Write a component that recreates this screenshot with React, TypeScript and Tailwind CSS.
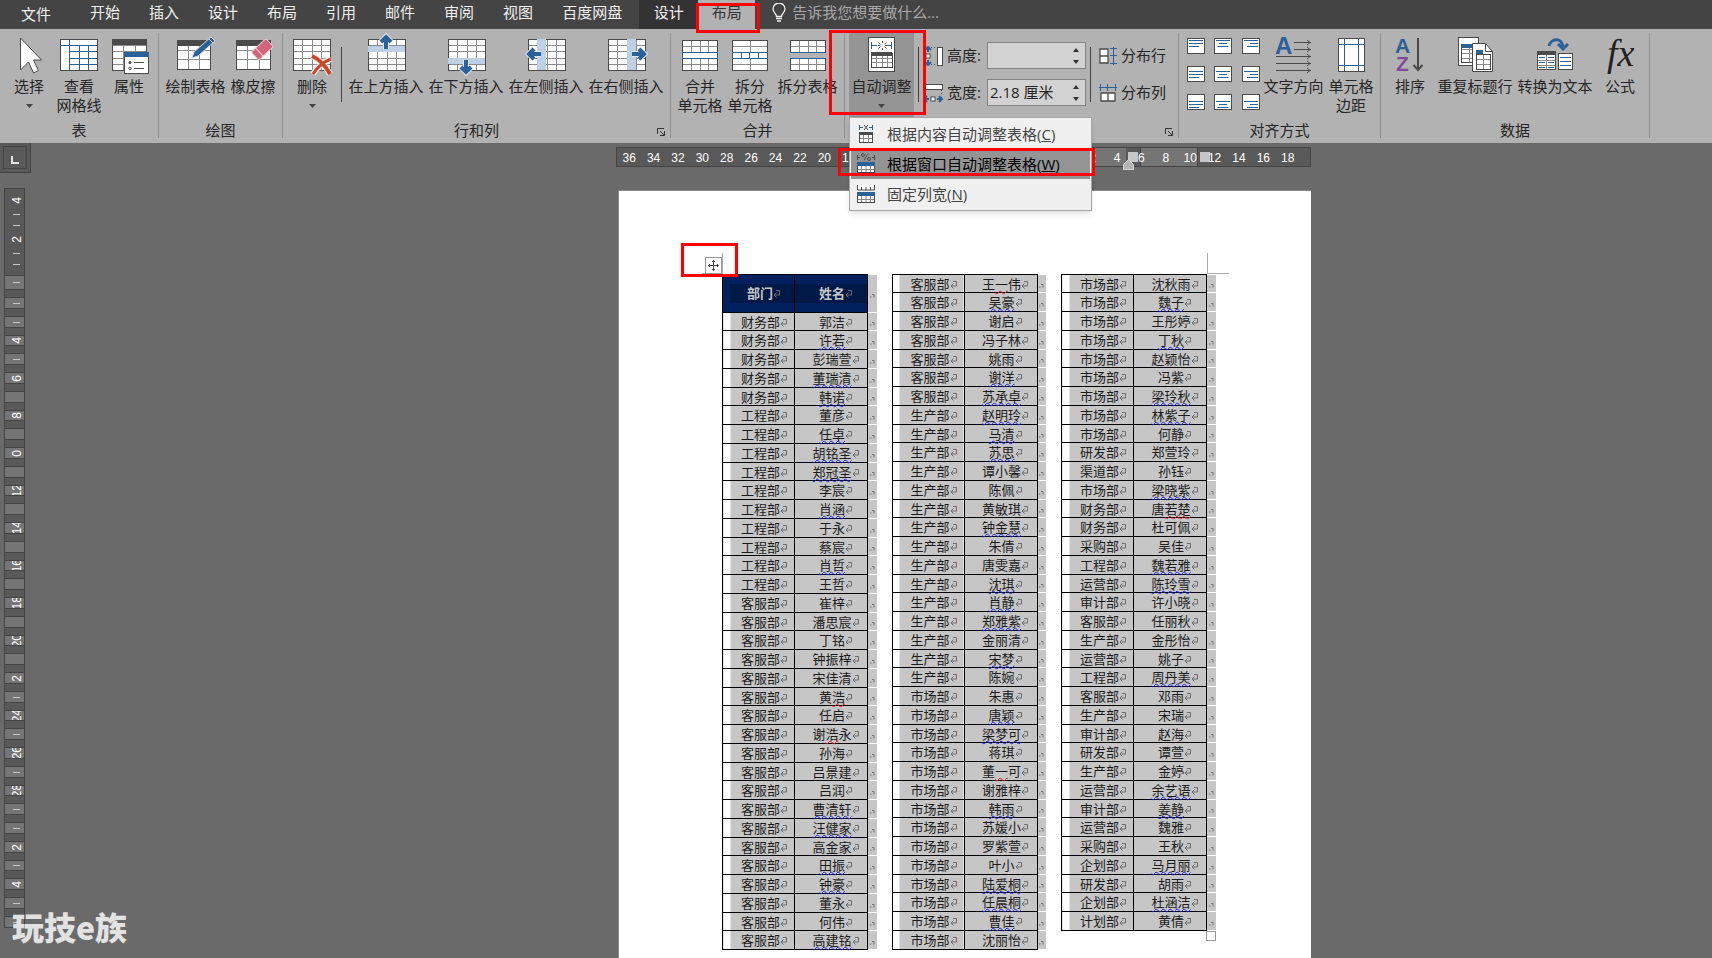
import React from 'react';

const INK = '#4a4a4a';
const BLUE = '#2b6199';
const TINT = '#bdd0e6';

const tabs = ['开始', '插入', '设计', '布局', '引用', '邮件', '审阅', '视图', '百度网盘'];

// "~" marks a grammar squiggle under the whole name, [..] a spelling squiggle
const columns: [string, string][][] = [
  [
    ['财务部', '郭洁'], ['财务部', '~许若'], ['财务部', '彭瑞萱'], ['财务部', '~董瑞清'], ['财务部', '~韩诺'],
    ['工程部', '董彦'], ['工程部', '~任卓'], ['工程部', '~胡铭圣'], ['工程部', '~郑冠圣'], ['工程部', '李宸'],
    ['工程部', '~肖涵'], ['工程部', '于永'], ['工程部', '蔡宸'], ['工程部', '~肖哲'], ['工程部', '王哲'],
    ['客服部', '崔梓'], ['客服部', '潘思宸'], ['客服部', '丁铭'], ['客服部', '钟振梓'], ['客服部', '宋佳清'],
    ['客服部', '黄[浩]'], ['客服部', '任启'], ['客服部', '谢[浩]永'], ['客服部', '孙海'], ['客服部', '吕景建'],
    ['客服部', '吕润'], ['客服部', '~曹清轩'], ['客服部', '~汪健家'], ['客服部', '高金家'], ['客服部', '~田振'],
    ['客服部', '~钟豪'], ['客服部', '董永'], ['客服部', '何伟'], ['客服部', '~高建铭'],
  ],
  [
    ['客服部', '王[一]伟'], ['客服部', '~吴豪'], ['客服部', '谢启'], ['客服部', '冯子林'], ['客服部', '姚雨'],
    ['客服部', '~谢洋'], ['客服部', '~苏承卓'], ['生产部', '~赵明玲'], ['生产部', '~马清'], ['生产部', '~苏思'],
    ['生产部', '谭小馨'], ['生产部', '陈佩'], ['生产部', '黄敏琪'], ['生产部', '~钟金慧'], ['生产部', '朱倩'],
    ['生产部', '唐雯嘉'], ['生产部', '~沈琪'], ['生产部', '~肖静'], ['生产部', '~郑雅紫'], ['生产部', '金丽清'],
    ['生产部', '~宋梦'], ['生产部', '陈婉'], ['市场部', '朱惠'], ['市场部', '~唐颖'], ['市场部', '~梁梦可'],
    ['市场部', '蒋琪'], ['市场部', '董[一]可'], ['市场部', '谢雅梓'], ['市场部', '~韩雨'], ['市场部', '苏媛小'],
    ['市场部', '罗紫萱'], ['市场部', '叶小'], ['市场部', '~陆爱桐'], ['市场部', '~任晨桐'], ['市场部', '~曹佳'],
    ['市场部', '沈丽怡'],
  ],
  [
    ['市场部', '沈秋雨'], ['市场部', '~魏子'], ['市场部', '王彤婷'], ['市场部', '~丁秋'], ['市场部', '赵颖怡'],
    ['市场部', '冯紫'], ['市场部', '~梁玲秋'], ['市场部', '~林紫子'], ['市场部', '何静'], ['研发部', '郑萱玲'],
    ['渠道部', '孙钰'], ['市场部', '~梁晓紫'], ['财务部', '唐[若楚]'], ['财务部', '杜可佩'], ['采购部', '吴佳'],
    ['工程部', '~魏若雅'], ['运营部', '~陈玲雪'], ['审计部', '许小晓'], ['客服部', '任丽秋'], ['生产部', '金彤怡'],
    ['运营部', '姚子'], ['工程部', '~周丹美'], ['客服部', '邓雨'], ['生产部', '宋瑞'], ['审计部', '赵海'],
    ['研发部', '谭萱'], ['生产部', '金婷'], ['运营部', '~余艺语'], ['审计部', '~姜静'], ['运营部', '魏雅'],
    ['采购部', '王秋'], ['企划部', '~马月丽'], ['研发部', '胡雨'], ['企划部', '~杜涵洁'], ['计划部', '黄倩'],
  ],
];

/* ---------- icons ---------- */

const Svg = ({ children }: { children: React.ReactNode }) => (
  <svg className="block w-10 h-10 overflow-visible" viewBox="0 0 40 40" fill="none" aria-hidden="true">
    {children}
  </svg>
);

type GridProps = { x: number; y: number; w: number; h: number; cols: number; rows: number; frame?: string; line?: string };

const Grid = ({ x, y, w, h, cols, rows, frame = INK, line = '#8a8a8a' }: GridProps) => (
  <g shapeRendering="crispEdges">
    <rect x={x} y={y} width={w} height={h} fill="#fff" />
    {Array.from({ length: cols - 1 }, (_, i) => (
      <path key={`c${i}`} d={`M${x + Math.round((w * (i + 1)) / cols)} ${y}v${h}`} stroke={line} />
    ))}
    {Array.from({ length: rows - 1 }, (_, i) => (
      <path key={`r${i}`} d={`M${x} ${y + Math.round((h * (i + 1)) / rows)}h${w}`} stroke={line} />
    ))}
    <rect x={x} y={y} width={w} height={h} stroke={frame} />
  </g>
);

const SelectIcon = () => (
  <Svg>
    <path d="M11.500 1v32l8-8 5 11 5-2.500-5-10.500h8z" fill="#fff" stroke={INK} />
  </Svg>
);

const GridlinesIcon = () => (
  <Svg>
    <g shapeRendering="crispEdges">
      <rect x="1" y="2" width="37" height="31" fill="#fff" stroke={INK} />
      <path d="M1 8h37M10 2v31M10 14h28M10 21h28M10 27h28M20 8v25M29 8v25" stroke={BLUE} />
    </g>
  </Svg>
);

const PropertiesIcon = () => (
  <Svg>
    <Grid x={3} y={2} w={34} h={31} cols={3} rows={5} />
    <path d="M3 2h34v6H3z" fill={INK} />
    <rect x="15.500" y="15.500" width="24" height="21" fill="#fff" stroke={INK} />
    <path d="M15 15h25v5H15z" fill={BLUE} />
    <circle cx="21" cy="25.500" r="1.500" fill={INK} />
    <circle cx="21" cy="31.500" r="1.200" stroke={INK} />
    <path d="M25 25.500h10M25 31.500h10" stroke={INK} />
  </Svg>
);

const DrawTableIcon = () => (
  <Svg>
    <Grid x={1} y={3} w={33} h={29} cols={3} rows={3} />
    <path d="M1 3h33v6H1z" fill={INK} />
    <path d="m16 21 2-6L35 0l4 4-17 15z" fill={BLUE} stroke="#d8d8d8" />
    <path d="m33 2 4 4" stroke="#d8d8d8" />
  </Svg>
);

const EraserIcon = () => (
  <Svg>
    <Grid x={3} y={3} w={34} h={29} cols={3} rows={3} />
    <path d="M3 3h34v6H3z" fill={INK} />
    <g transform="rotate(-43 29 12)">
      <rect x="19" y="7" width="20" height="11" rx="2" fill="#d4647c" stroke="#e9c3cb" />
      <path d="M25 7v11" stroke="#f0ccd4" />
    </g>
  </Svg>
);

const DeleteIcon = () => (
  <Svg>
    <Grid x={1} y={2} w={37} h={31} cols={4} rows={5} />
    <path d="M20 19q11 5 18 18M39 22q-11 4-18 15" stroke="#ececec" strokeWidth="6" />
    <path d="M20 19q11 5 18 18" stroke="#c8492a" strokeWidth="4" />
    <path d="M39 22q-11 4-18 15" stroke="#c8492a" strokeWidth="3" />
  </Svg>
);

const InsertIcon = ({ side }: { side: 'up' | 'down' | 'left' | 'right' }) => {
  const spot = {
    up: { band: 'M2 9h37v6H2z', at: 'translate(20 4)' },
    down: { band: 'M2 21h37v6H2z', at: 'translate(20 31) rotate(180)' },
    left: { band: 'M11 2h9v31h-9z', at: 'translate(7 17) rotate(-90)' },
    right: { band: 'M21 2h9v31h-9z', at: 'translate(34 17) rotate(90)' },
  }[side];
  return (
    <Svg>
      <Grid x={2} y={2} w={37} h={31} cols={4} rows={5} />
      <path d={spot.band} fill={TINT} />
      <g transform={spot.at}>
        <path d="M0-4V8M-5 1l5-5 5 5" stroke="#e2e8f0" strokeWidth="6" />
        <path d="M0-4V8M-5 1l5-5 5 5" stroke={BLUE} strokeWidth="4" />
      </g>
    </Svg>
  );
};

const MergeIcon = () => (
  <Svg>
    <Grid x={2} y={3} w={35} h={30} cols={4} rows={5} />
    <path d="M2 15h35v6H2z" fill="#fff" stroke={BLUE} shapeRendering="crispEdges" />
  </Svg>
);

const SplitCellsIcon = () => (
  <Svg>
    <Grid x={2} y={3} w={35} h={30} cols={2} rows={5} />
    <g shapeRendering="crispEdges">
      <path d="M2 15h35v6H2z" fill="#fff" stroke={BLUE} />
      <path d="M11 15v6M19 15v6M28 15v6" stroke={BLUE} />
    </g>
  </Svg>
);

const SplitTableIcon = () => (
  <Svg>
    <Grid x={2} y={3} w={35} h={12} cols={4} rows={2} />
    <Grid x={2} y={21} w={35} h={12} cols={4} rows={2} />
    <path d="M2 15h35M2 21h35" stroke={BLUE} shapeRendering="crispEdges" />
  </Svg>
);

const AutoFitIcon = () => (
  <Svg>
    <rect x="6.500" y=".5" width="26" height="34" fill="#fff" stroke={INK} />
    <path d="M9.500 5v7M29.500 5v7M10 8.500h5M24 8.500h5" stroke={BLUE} />
    <path d="m16.500 5.500 2 2m4 2 2 2m0-6-2 2m-4 2-2 2M20.500 4v2M20.500 11v2M16 8.500h2M23 8.500h2" stroke={INK} />
    <Grid x={9} y={16} w={21} h={14} cols={4} rows={3} />
    <path d="M9 15h21v4H9z" fill={INK} />
  </Svg>
);

const TextDirectionIcon = () => (
  <Svg>
    <text x="1" y="17" fontSize="24" fontWeight="700" fill={BLUE} fontFamily="Liberation Sans, sans-serif">A</text>
    {[[20, 5], [20, 12], [2, 19], [2, 26], [2, 33]].map(([x, y]) => (
      <path key={y} d={`M${x} ${y}.5H37M33 ${y - 2}l3 2.500-3 2.500`} stroke={INK} />
    ))}
  </Svg>
);

const MarginsIcon = () => (
  <Svg>
    <g shapeRendering="crispEdges">
      <rect x="7" y="1" width="26" height="33" fill="#fff" stroke={INK} />
      <path d="M13 1v33M27 1v33M7 7h26M7 28h26" stroke={BLUE} />
    </g>
  </Svg>
);

const SortIcon = () => (
  <Svg>
    <g fontSize="21" fontWeight="700" fontFamily="Liberation Sans, sans-serif">
      <text x="5" y="16" fill={BLUE}>A</text>
      <text x="6" y="34" fill="#804a9e">Z</text>
    </g>
    <path d="M28 1v32M23.500 28l4.500 5 4.500-5" stroke={INK} strokeWidth="2" />
  </Svg>
);

const RepeatHeaderIcon = () => (
  <Svg>
    <rect x="3.500" y=".5" width="20" height="28" fill="#fff" stroke={INK} />
    <Grid x={6} y={7} w={15} h={18} cols={2} rows={4} />
    <path d="M6 7h15v4H6z" fill={BLUE} />
    <path d="M17.500 6.500h13l7 8v20h-20z" fill="#fff" stroke={INK} />
    <path d="M30.500 6.500v8h7" stroke={INK} />
    <Grid x={21} y={17} w={14} h={15} cols={2} rows={3} />
    <path d="M21 13h7v4h-7z" fill={BLUE} />
  </Svg>
);

const ConvertIcon = () => (
  <Svg>
    <path d="M14 9C16 1 27 0 28 10M23 7l5 5 5-5" stroke={BLUE} strokeWidth="3" />
    <rect x="2.500" y="14.500" width="18" height="18" fill="#fff" stroke={INK} />
    <path d="M2 14h19v4H2z" fill={INK} />
    <path d="M11.500 18v15M3 23.500h17M3 28.500h17" stroke="#8a8a8a" />
    <path d="M4 20.500h6M13 20.500h6M4 25.500h6M13 25.500h6M4 30.500h6M13 30.500h6" stroke={BLUE} />
    <rect x="23.500" y="16.500" width="14" height="16" fill="#fff" stroke={INK} />
    <path d="M25 20.500h11M25 24.500h11M25 28.500h11" stroke={BLUE} />
  </Svg>
);

const FormulaIcon = () => (
  <Svg>
    <text x="7" y="29" fontSize="38" fontStyle="italic" fill="#222" fontFamily="Liberation Serif, serif">fx</text>
  </Svg>
);

const Caret = () => (
  <svg className="block mt-2 mx-auto" width="7" height="4" viewBox="0 0 7 4" aria-hidden="true">
    <path d="M0 0h7L3.500 4z" fill="#444" />
  </svg>
);

const HeightIcon = () => (
  <svg width="20" height="20" viewBox="0 0 20 20" fill="none" aria-hidden="true">
    <path d="M8 1.500h5M8 18.500h5" stroke={INK} strokeDasharray="1 2" />
    <rect x="14.500" y="1.500" width="5" height="18" fill="#fff" stroke={INK} />
    <rect x="3" y="8" width="4" height="4" fill="#fff" stroke={INK} />
    <path d="M5 6V1M2 4l3-3 3 3M5 14v5M2 16l3 3 3-3" stroke={BLUE} strokeWidth="2" />
  </svg>
);

const WidthIcon = () => (
  <svg width="20" height="20" viewBox="0 0 20 20" fill="none" aria-hidden="true">
    <path d="M1.500 7v5M18.500 7v5" stroke={INK} strokeDasharray="1 2" />
    <rect x=".5" y="1.500" width="19" height="5" fill="#fff" stroke={INK} />
    <rect x="8" y="14" width="4" height="4" fill="#fff" stroke={INK} />
    <path d="M6 16H1M4 13l-3 3 3 3M14 16h5M16 13l3 3-3 3" stroke={BLUE} strokeWidth="2" />
  </svg>
);

const DistributeRowsIcon = () => (
  <svg width="18" height="18" viewBox="0 0 18 18" fill="none" aria-hidden="true">
    <path d="M1 2h8v14H1zM1 9h8" fill="#fff" stroke={INK} strokeWidth="1.300" />
    <path d="M11 1.500h7M11 8.500h7M11 16.500h7M14.500 0v18" stroke={BLUE} />
  </svg>
);

const DistributeColsIcon = () => (
  <svg width="18" height="18" viewBox="0 0 18 18" fill="none" aria-hidden="true">
    <path d="M2 9h14v8H2zM9 9v8" fill="#fff" stroke={INK} strokeWidth="1.300" />
    <path d="M1.500 0v7M8.500 0v7M16.500 0v7M0 3.500h18" stroke={BLUE} />
  </svg>
);

const AlignIcon = ({ v, h }: { v: number; h: number }) => {
  const widths = h === 0 ? [14, 14, 10] : [14, 8, 11];
  const top = [2, 5, 7][v];
  return (
    <svg className="block" width="18" height="16" viewBox="0 0 18 16" fill="none" aria-hidden="true">
      <rect x=".5" y=".5" width="17" height="15" fill="#fff" stroke={INK} />
      {widths.map((w, i) => {
        const x = [2, 9 - w / 2, 16 - w][h];
        return <path key={i} d={`M${x} ${top + i * 3}.5h${w}`} stroke={BLUE} />;
      })}
    </svg>
  );
};

const MenuIcon = ({ kind }: { kind: 'content' | 'window' | 'fixed' }) => (
  <svg className="block w-[18px] h-[18px] shrink-0 overflow-visible" viewBox="0 0 18 18" fill="none" aria-hidden="true">
    {kind === 'content' && <path d="M2.500 0v5M15.500 0v5M3 2.500h3M12 2.500h3" stroke={BLUE} />}
    {kind === 'content' && <path d="m7 0 4 5m0-5L7 5" stroke={INK} />}
    {kind === 'window' && (
      <g stroke={INK}>
        <path d="M.5 0v5M17.500 0v5M1 2.500h2M15 2.500h2M11 -1.500 7 5.500" />
        <circle cx="6" cy="0" r="1.500" />
        <circle cx="12" cy="4" r="1.500" />
      </g>
    )}
    {kind === 'fixed' && <path d="M.5 0v5h17V0M4.500 2v3M9 2v3M13.500 2v3" fill="#fff" stroke={INK} />}
    <rect x={kind === 'content' ? 2.5 : 0.5} y="7.500" width={kind === 'content' ? 13 : 17} height="10" fill="#fff" stroke={INK} />
    <path d={kind === 'content' ? 'M3 13.500h12M6.500 10v7M11.500 10v7' : 'M1 14.500h16M4.500 11v6M9 11v6M13.500 11v6'} stroke="#888" />
    <path d={kind === 'content' ? 'M2 7h14v3H2z' : 'M0 7h18v4H0z'} fill={kind === 'content' ? INK : BLUE} />
  </svg>
);

/* ---------- ribbon ---------- */

type ToolProps = { icon: React.ReactNode; lines: string[]; width: string; caret?: boolean; active?: boolean };

const Tool = ({ icon, lines, width, caret, active }: ToolProps) => (
  <button
    type="button"
    className={`${width} ${active ? 'bg-[#949494]' : ''} h-[84px] pt-1 flex flex-col items-center shrink-0 whitespace-nowrap leading-[19px]`}
  >
    {icon}
    {lines.map((line) => (
      <span key={line}>{line}</span>
    ))}
    {caret && <Caret />}
  </button>
);

const Group = ({ title, launcher, children }: { title: string; launcher?: boolean; children: React.ReactNode }) => (
  <section className="relative px-1 border-r border-[#919191] shrink-0">
    <div className="flex">{children}</div>
    <h2 className="mt-[5px] h-4 leading-4 text-center">{title}</h2>
    {launcher && (
      <button type="button" aria-label={title} className="absolute right-[5px] bottom-0.5">
        <svg className="block" width="8" height="8" viewBox="0 0 8 8" fill="none" aria-hidden="true">
          <path d="M.5 6V.5H7M3 3l4 4M7.500 3v4.500H3" stroke="#333" />
        </svg>
      </button>
    )}
  </section>
);

const Rule = () => <div className="w-px h-[55px] mx-1 mt-3.5 bg-[#444] shrink-0" />;

const SizeField = ({ id, label, value, icon }: { id: string; label: string; value: string; icon: React.ReactNode }) => (
  <div className="flex items-center h-[27px]">
    {icon}
    <label htmlFor={id} className="w-9 ml-1 whitespace-nowrap">{label}</label>
    <div className="flex ml-1 w-[99px] h-[27px] bg-[#d2d2d2] border border-[#848484]">
      <input id={id} defaultValue={value} className="w-[79px] px-0.5 bg-transparent outline-none" />
      <div className="flex flex-col justify-center gap-2 w-[18px]">
        <button type="button" aria-label="增大" className="flex justify-center">
          <svg width="6" height="4" viewBox="0 0 6 4" aria-hidden="true"><path d="M0 4h6L3 0z" fill="#333" /></svg>
        </button>
        <button type="button" aria-label="减小" className="flex justify-center">
          <svg width="6" height="4" viewBox="0 0 6 4" aria-hidden="true"><path d="M0 0h6L3 4z" fill="#333" /></svg>
        </button>
      </div>
    </div>
  </div>
);

const Highlight = ({ className }: { className: string }) => (
  <div className={`absolute border-3 border-[#ff0000] pointer-events-none z-30 ${className}`} />
);

const AutoFitMenu = () => (
  <div role="menu" className="absolute z-20 top-full left-0 w-[243px] p-px bg-[#f0f0f0] border border-[#a6a6a6] shadow-md text-[#444]">
    <button type="button" role="menuitem" className="flex items-center w-full h-[30px] pl-1.5 whitespace-nowrap">
      <MenuIcon kind="content" />
      <span className="ml-3">根据内容自动调整表格(<u>C</u>)</span>
    </button>
    <button type="button" role="menuitem" className="relative flex items-center w-full h-[30px] pl-1.5 bg-[#949494] text-black whitespace-nowrap">
      <MenuIcon kind="window" />
      <span className="ml-3">根据窗口自动调整表格(<u>W</u>)</span>
      <Highlight className="-left-[13px] -right-[5px] -top-px h-[28px]" />
    </button>
    <button type="button" role="menuitem" className="flex items-center w-full h-[30px] pl-1.5 whitespace-nowrap">
      <MenuIcon kind="fixed" />
      <span className="ml-3">固定列宽(<u>N</u>)</span>
    </button>
  </div>
);

const TabBar = () => (
  <nav className="flex h-[29px] bg-[#444] text-[#f0f0f0] leading-6 whitespace-nowrap">
    <button type="button" className="w-[72px] pb-0.5 text-center">文件</button>
    <div className="flex gap-[29px] pl-[18px] pr-[17px] pb-[5px]">
      {tabs.map((tab) => (
        <button type="button" key={tab}>{tab}</button>
      ))}
    </div>
    <button type="button" className="w-[59px] pb-[5px] bg-[#333]">设计</button>
    <button type="button" className="relative w-[57px] pb-[5px] bg-[#b2b2b2] text-[#333]">
      布局
      <Highlight className="-left-0.5 -right-[5px] top-[3px] h-[30px]" />
    </button>
    <label className="flex items-center ml-[17px] pb-[5px] text-[#a8a8a8]">
      <svg width="14" height="19" viewBox="0 0 14 19" fill="none" aria-hidden="true">
        <path d="M4.500 13.500c0-3-3.500-4-3.500-7.500a6 6 0 0 1 12 0c0 3.500-3.500 4.500-3.500 7.500z" stroke="#f0f0f0" strokeWidth="1.300" />
        <path d="M4 15.500h6M5 18h4" stroke="#f0f0f0" strokeWidth="1.500" />
      </svg>
      <input
        aria-label="告诉我您想要做什么"
        placeholder="告诉我您想要做什么..."
        className="ml-1.5 w-44 bg-transparent outline-none placeholder:text-[#a8a8a8]"
      />
    </label>
  </nav>
);

const Ribbon = () => (
  <div className="flex pt-1 pb-[5px] bg-[#b2b2b2] text-[#262626]">
    <Group title="表">
      <Tool icon={<SelectIcon />} lines={['选择']} width="w-[50px]" caret />
      <Tool icon={<GridlinesIcon />} lines={['查看', '网格线']} width="w-[50px]" />
      <Tool icon={<PropertiesIcon />} lines={['属性']} width="w-[50px]" />
    </Group>
    <Group title="绘图">
      <Tool icon={<DrawTableIcon />} lines={['绘制表格']} width="w-[65px]" />
      <Tool icon={<EraserIcon />} lines={['橡皮擦']} width="w-[50px]" />
    </Group>
    <Group title="行和列" launcher>
      <Tool icon={<DeleteIcon />} lines={['删除']} width="w-[50px]" caret />
      <Rule />
      <Tool icon={<InsertIcon side="up" />} lines={['在上方插入']} width="w-20" />
      <Tool icon={<InsertIcon side="down" />} lines={['在下方插入']} width="w-20" />
      <Tool icon={<InsertIcon side="left" />} lines={['在左侧插入']} width="w-20" />
      <Tool icon={<InsertIcon side="right" />} lines={['在右侧插入']} width="w-20" />
    </Group>
    <Group title="合并">
      <Tool icon={<MergeIcon />} lines={['合并', '单元格']} width="w-[50px]" />
      <Tool icon={<SplitCellsIcon />} lines={['拆分', '单元格']} width="w-[50px]" />
      <Tool icon={<SplitTableIcon />} lines={['拆分表格']} width="w-[65px]" />
    </Group>
    <Group title="单元格大小" launcher>
      <div className="relative">
        <Tool icon={<AutoFitIcon />} lines={['自动调整']} width="w-[65px]" caret active />
        <AutoFitMenu />
        <Highlight className="-left-5 -right-3 -top-[3px] h-[85px]" />
      </div>
      <Rule />
      <div className="flex flex-col gap-2.5 pt-[9px]">
        <SizeField id="row-height" label="高度:" value="" icon={<HeightIcon />} />
        <SizeField id="col-width" label="宽度:" value="2.18 厘米" icon={<WidthIcon />} />
      </div>
      <Rule />
      <div className="flex flex-col gap-2.5 pt-[9px] pl-1 w-[79px]">
        <button type="button" className="flex items-center gap-1 h-[27px] whitespace-nowrap">
          <DistributeRowsIcon />分布行
        </button>
        <button type="button" className="flex items-center gap-1 h-[27px] whitespace-nowrap">
          <DistributeColsIcon />分布列
        </button>
      </div>
    </Group>
    <Group title="对齐方式">
      <div className="grid grid-cols-3 gap-x-2 gap-y-3 content-start w-[78px] pt-[5px] pl-1">
        {[0, 1, 2].map((v) =>
          [0, 1, 2].map((h) => (
            <button type="button" key={`${v}${h}`} aria-label={`${['靠上', '中部', '靠下'][v]}${['两端', '居中', '右'][h]}对齐`}>
              <AlignIcon v={v} h={h} />
            </button>
          ))
        )}
      </div>
      <Tool icon={<TextDirectionIcon />} lines={['文字方向']} width="w-[65px]" />
      <Tool icon={<MarginsIcon />} lines={['单元格', '边距']} width="w-[50px]" />
    </Group>
    <Group title="数据">
      <Tool icon={<SortIcon />} lines={['排序']} width="w-[50px]" />
      <Tool icon={<RepeatHeaderIcon />} lines={['重复标题行']} width="w-20" />
      <Tool icon={<ConvertIcon />} lines={['转换为文本']} width="w-20" />
      <Tool icon={<FormulaIcon />} lines={['公式']} width="w-[50px]" />
    </Group>
  </div>
);

/* ---------- rulers ---------- */

const rulerMarks = [36, 34, 32, 30, 28, 26, 24, 22, 20, 18, 16, 14, 12, 10, 8, 6, 4, 2, 0, 2, 4, 6, 8, 10, 12, 14, 16, 18];

const HorizontalRuler = () => (
  <div className="relative flex h-5 -ml-0.5 mt-1 pr-[10px] bg-[#595959] border border-[#444] text-white text-xs font-medium leading-5 font-['Liberation_Sans',sans-serif]">
    <div className="absolute inset-y-0 left-[236px] right-[184px] bg-[#757575]" />
    <div className="absolute inset-y-0 right-[112px] w-[58px] bg-[#757575] border-x border-[#444]" />
    <div className="absolute top-1 right-[172px] size-2.5 bg-[#c6c6c6]" />
    <div className="absolute top-1 right-[100px] size-2.5 bg-[#c6c6c6]" />
    <svg className="absolute top-[11px] right-[176px]" width="11" height="11" viewBox="0 0 11 11" aria-hidden="true">
      <path d="M.5 10.500v-5l5-5 5 5v5z" fill="#b4b4b4" stroke="#d8d8d8" />
    </svg>
    {rulerMarks.map((mark, i) => (
      <span key={i} className="relative flex-1 text-center">{mark || ''}</span>
    ))}
  </div>
);

const sideMarks: Record<number, string> = {
  2: '4', 4: '6', 6: '8', 8: '0', 10: '12', 12: '14', 14: '16', 16: '18', 18: '20', 20: '2', 22: '24', 24: '26', 26: '28', 29: '2', 31: '4',
};

const SideNumber = ({ children }: { children: React.ReactNode }) => (
  <span className="[writing-mode:vertical-rl] rotate-180 leading-3">{children}</span>
);

const Tick = () => <span className="w-[7px] h-px bg-[#c8c8c8]" />;

const VerticalRuler = () => (
  <div className="w-[21px] ml-1 mt-[15px] bg-[#757575] border border-[#444] text-white text-xs font-['Liberation_Sans',sans-serif]" aria-hidden="true">
    <div className="flex flex-col items-center justify-between h-[87px] pt-2 pb-2.5 pl-1 bg-[#595959] border-b border-[#444]">
      <SideNumber>4</SideNumber>
      <Tick />
      <Tick />
      <SideNumber>2</SideNumber>
      <Tick />
      <Tick />
    </div>
    <div className="flex h-[13px] items-center justify-center pl-1"><Tick /></div>
    {Array.from({ length: 34 }, (_, i) => (
      <div key={i} className="flex flex-col h-[19px] nth-[4n+1]:h-[18px]">
        <div className="h-[9px] shrink-0 bg-[#595959] border-y border-[#444]" />
        <div className="flex flex-1 min-h-0 items-center justify-center pl-1 overflow-hidden">
          {sideMarks[i] ? <SideNumber>{sideMarks[i]}</SideNumber> : (i < 4 || i > 20) && <Tick />}
        </div>
      </div>
    ))}
  </div>
);

/* ---------- document ---------- */

const ReturnMark = () => (
  <span className="inline-block w-0 h-2 align-baseline" aria-hidden="true">
    <svg className="block w-[7px] h-2 max-w-none" viewBox="0 0 7 8" fill="none">
      <path d="M3 .5h3.500v4.500H1M3.500 2.500 1 5l2.500 2.500" stroke="#6c6c6c" />
    </svg>
  </span>
);

const Name = ({ text }: { text: string }) => {
  if (text.startsWith('~')) {
    return (
      <span className="underline decoration-wavy decoration-1 decoration-[#1c1cf0] underline-offset-1 [text-decoration-skip-ink:none]">
        {text.slice(1)}
      </span>
    );
  }
  return (
    <>
      {text.split(/[[\]]/).map((part, i) =>
        i === 1 ? (
          <span key={i} className="underline decoration-wavy decoration-1 decoration-[#f01c1c] underline-offset-1 [text-decoration-skip-ink:none]">
            {part}
          </span>
        ) : (
          part
        )
      )}
    </>
  );
};

const RowEnd = () => (
  <td className="p-0 bg-[#c6c6c6] border-y border-white" aria-hidden="true">
    <svg className="block mx-auto mt-1" width="5" height="5" viewBox="0 0 5 5" fill="none">
      <path d="M0 4h1.500M2 1.500h2v3" stroke="#777" />
    </svg>
  </td>
);

const StaffTable = ({ rows, header }: { rows: [string, string][]; header?: boolean }) => (
  <table className="table-fixed w-[154px] border-collapse text-[13px] leading-4 text-center text-[#1c1c1c] whitespace-nowrap">
    <colgroup>
      <col className="w-[72px]" />
      <col className="w-[73px]" />
      <col className="w-[9px]" />
    </colgroup>
    {header && (
      <thead>
        <tr className="h-[38px] text-[#c6c6c6]">
          <th className="p-0 bg-[#00205e] border border-black">
            <div className="h-[19px] ml-[7px] pr-1 leading-[19px] bg-[#001946]">部门<ReturnMark /></div>
          </th>
          <th className="p-0 bg-[#00205e] border border-black">
            <div className="h-[19px] pl-0.5 leading-[19px] bg-[#001946]">姓名<ReturnMark /></div>
          </th>
          <RowEnd />
        </tr>
      </thead>
    )}
    <tbody>
      {rows.map(([dept, name], i) => (
        <tr key={i} className="h-[19px] nth-[4n+1]:h-[18px]">
          <td className="p-0 pl-1 border border-black bg-[linear-gradient(to_right,#fff_7px,#c6c6c6_7px)]">{dept}<ReturnMark /></td>
          <td className="p-0 pl-0.5 border border-black bg-[#c6c6c6]"><Name text={name} /><ReturnMark /></td>
          <RowEnd />
        </tr>
      ))}
    </tbody>
  </table>
);

const Page = () => (
  <div className="relative flex-1 mt-[23px] pt-[83px] pl-[103px] bg-white border-t border-l border-[#8a8a8a]">
    <div className="relative flex items-start gap-[15px] w-[492px]">
      <div className="absolute -top-[21px] -left-5 w-[21px] h-[21px] border-r border-b border-[#aaa]" />
      <div className="absolute -top-[21px] right-[6px] w-px h-[21px] bg-[#aaa]" />
      <div className="absolute -top-px -right-[15px] w-[21px] h-px bg-[#aaa]" />
      <div className="absolute -top-[17px] -left-[17px] size-[17px] bg-white border border-[#999]">
        <svg className="block" width="15" height="15" viewBox="0 0 15 15" fill="none" aria-hidden="true">
          <path d="M7.500 2v11M2 7.500h11M6 3.500h3M6 11.500h3M3.500 6v3M11.500 6v3" stroke="#444" />
        </svg>
      </div>
      <Highlight className="-top-[31px] -left-[41px] w-[57px] h-[34px]" />
      <StaffTable rows={columns[0]} header />
      <StaffTable rows={columns[1]} />
      <div>
        <StaffTable rows={columns[2]} />
        <div className="size-[10px] ml-auto bg-white border border-[#999]" />
      </div>
    </div>
  </div>
);

export default function App() {
  return (
    <div className="h-screen flex flex-col overflow-hidden bg-[#6a6a6a] text-[15px] font-['Open_Sans','Noto_Sans_CJK_SC',sans-serif]">
      <TabBar />
      <Ribbon />
      <main className="relative flex flex-1 min-h-0">
        <aside className="w-[217px] shrink-0">
          <div className="w-[31px] h-[30px] p-[3px] bg-[#595959] border-r border-b border-[#444]">
            <div className="flex items-center justify-center w-6 h-[23px] border border-[#444]">
              <span className="size-2 mt-1 border-l-2 border-b-2 border-[#e4e4e4]" />
            </div>
          </div>
          <VerticalRuler />
        </aside>
        <div className="flex flex-1 justify-center">
          <div className="flex flex-col w-[693px]">
            <HorizontalRuler />
            <Page />
          </div>
        </div>
        <div className="absolute left-3 bottom-4 text-[32px] leading-8 font-black text-[#e2e2e2] font-['Noto_Sans_CJK_SC',sans-serif]">玩技e族</div>
      </main>
    </div>
  );
}
